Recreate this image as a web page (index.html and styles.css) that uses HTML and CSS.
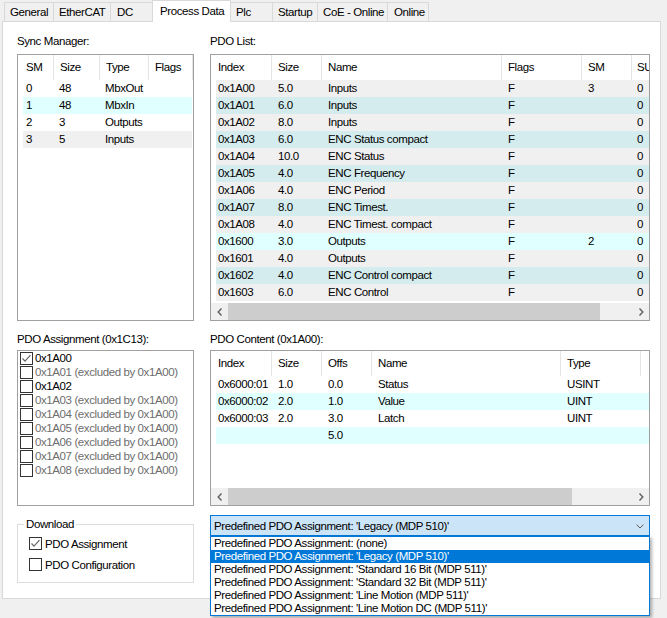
FILE: index.html
```html
<!DOCTYPE html>
<html>
<head>
<meta charset="utf-8">
<title>Process Data</title>
<link rel="stylesheet" href="styles.css">
</head>
<body>
<div class="tabstrip">
  <div class="tab t-general">General</div>
  <div class="tab t-ethercat">EtherCAT</div>
  <div class="tab t-dc">DC</div>
  <div class="tab t-pd active">Process Data</div>
  <div class="tab t-plc">Plc</div>
  <div class="tab t-startup">Startup</div>
  <div class="tab t-coe">CoE - Online</div>
  <div class="tab t-online">Online</div>
</div>
<div class="panel">
  <div class="col col-left">
    <div class="label">Sync Manager:</div>
    <div class="lv box-top lv-sync">
      <div class="lv-head"><span>SM</span><span>Size</span><span>Type</span><span>Flags</span></div>
      <div class="lv-body">
        <div class="row"><span>0</span><span>48</span><span>MbxOut</span><span></span></div>
        <div class="row cyan"><span>1</span><span>48</span><span>MbxIn</span><span></span></div>
        <div class="row"><span>2</span><span>3</span><span>Outputs</span><span></span></div>
        <div class="row gray"><span>3</span><span>5</span><span>Inputs</span><span></span></div>
      </div>
    </div>
    <div class="label second">PDO Assignment (0x1C13):</div>
    <div class="lv box-mid checklist">
      <div class="ci"><span class="cb"><svg viewBox="0 0 13 13" width="13" height="13"><polyline points="2.5,6.5 5,9.2 10.5,3.2" fill="none" stroke="#666" stroke-width="1.2"/></svg></span><span>0x1A00</span></div>
      <div class="ci dis"><span class="cb"></span><span>0x1A01 (excluded by 0x1A00)</span></div>
      <div class="ci"><span class="cb"></span><span>0x1A02</span></div>
      <div class="ci dis"><span class="cb"></span><span>0x1A03 (excluded by 0x1A00)</span></div>
      <div class="ci dis"><span class="cb"></span><span>0x1A04 (excluded by 0x1A00)</span></div>
      <div class="ci dis"><span class="cb"></span><span>0x1A05 (excluded by 0x1A00)</span></div>
      <div class="ci dis"><span class="cb"></span><span>0x1A06 (excluded by 0x1A00)</span></div>
      <div class="ci dis"><span class="cb"></span><span>0x1A07 (excluded by 0x1A00)</span></div>
      <div class="ci dis"><span class="cb"></span><span>0x1A08 (excluded by 0x1A00)</span></div>
    </div>
    <fieldset class="group">
      <legend>Download</legend>
      <div class="opt"><span class="cb"><svg viewBox="0 0 13 13" width="13" height="13"><polyline points="2.5,6.5 5,9.2 10.5,3.2" fill="none" stroke="#666" stroke-width="1.2"/></svg></span><span>PDO Assignment</span></div>
      <div class="opt"><span class="cb"></span><span>PDO Configuration</span></div>
    </fieldset>
  </div>
  <div class="col col-right">
    <div class="label">PDO List:</div>
    <div class="lv box-top lv-list">
      <div class="lv-head"><span>Index</span><span>Size</span><span>Name</span><span>Flags</span><span>SM</span><span>SU</span></div>
      <div class="lv-body">
        <div class="row gray"><span>0x1A00</span><span>5.0</span><span>Inputs</span><span>F</span><span>3</span><span>0</span></div>
        <div class="row teal"><span>0x1A01</span><span>6.0</span><span>Inputs</span><span>F</span><span></span><span>0</span></div>
        <div class="row gray"><span>0x1A02</span><span>8.0</span><span>Inputs</span><span>F</span><span></span><span>0</span></div>
        <div class="row teal"><span>0x1A03</span><span>6.0</span><span>ENC Status compact</span><span>F</span><span></span><span>0</span></div>
        <div class="row gray"><span>0x1A04</span><span>10.0</span><span>ENC Status</span><span>F</span><span></span><span>0</span></div>
        <div class="row teal"><span>0x1A05</span><span>4.0</span><span>ENC Frequency</span><span>F</span><span></span><span>0</span></div>
        <div class="row gray"><span>0x1A06</span><span>4.0</span><span>ENC Period</span><span>F</span><span></span><span>0</span></div>
        <div class="row teal"><span>0x1A07</span><span>8.0</span><span>ENC Timest.</span><span>F</span><span></span><span>0</span></div>
        <div class="row gray"><span>0x1A08</span><span>4.0</span><span>ENC Timest. compact</span><span>F</span><span></span><span>0</span></div>
        <div class="row cyan"><span>0x1600</span><span>3.0</span><span>Outputs</span><span>F</span><span>2</span><span>0</span></div>
        <div class="row gray"><span>0x1601</span><span>4.0</span><span>Outputs</span><span>F</span><span></span><span>0</span></div>
        <div class="row teal"><span>0x1602</span><span>4.0</span><span>ENC Control compact</span><span>F</span><span></span><span>0</span></div>
        <div class="row gray"><span>0x1603</span><span>6.0</span><span>ENC Control</span><span>F</span><span></span><span>0</span></div>
      </div>
      <div class="hscroll">
        <span class="arr"><svg viewBox="0 0 6 8" width="6" height="8"><polyline points="4.5,0.5 1.2,4 4.5,7.5" fill="none" stroke="#606060" stroke-width="1.4"/></svg></span>
        <span class="track"><span class="thumb thumb-list"></span></span>
        <span class="arr"><svg viewBox="0 0 6 8" width="6" height="8"><polyline points="1.5,0.5 4.8,4 1.5,7.5" fill="none" stroke="#606060" stroke-width="1.4"/></svg></span>
      </div>
    </div>
    <div class="label second">PDO Content (0x1A00):</div>
    <div class="lv box-mid lv-content">
      <div class="lv-head"><span>Index</span><span>Size</span><span>Offs</span><span>Name</span><span>Type</span><span></span></div>
      <div class="lv-body">
        <div class="row"><span>0x6000:01</span><span>1.0</span><span>0.0</span><span>Status</span><span>USINT</span><span></span></div>
        <div class="row cyan"><span>0x6000:02</span><span>2.0</span><span>1.0</span><span>Value</span><span>UINT</span><span></span></div>
        <div class="row"><span>0x6000:03</span><span>2.0</span><span>3.0</span><span>Latch</span><span>UINT</span><span></span></div>
        <div class="row cyan"><span></span><span></span><span>5.0</span><span></span><span></span><span></span></div>
      </div>
      <div class="hscroll">
        <span class="arr"><svg viewBox="0 0 6 8" width="6" height="8"><polyline points="4.5,0.5 1.2,4 4.5,7.5" fill="none" stroke="#606060" stroke-width="1.4"/></svg></span>
        <span class="track"><span class="thumb thumb-content"></span></span>
        <span class="arr"><svg viewBox="0 0 6 8" width="6" height="8"><polyline points="1.5,0.5 4.8,4 1.5,7.5" fill="none" stroke="#606060" stroke-width="1.4"/></svg></span>
      </div>
    </div>
    <div class="combo-wrap">
      <div class="combo">
        <span>Predefined PDO Assignment: 'Legacy (MDP 510)'</span>
        <svg class="chev" viewBox="0 0 8 5" width="8" height="5"><polyline points="0.5,0.5 4,4 7.5,0.5" fill="none" stroke="#606060" stroke-width="1"/></svg>
      </div>
      <div class="dropdown">
        <div class="dd-item">Predefined PDO Assignment: (none)</div>
        <div class="dd-item sel">Predefined PDO Assignment: 'Legacy (MDP 510)'</div>
        <div class="dd-item">Predefined PDO Assignment: 'Standard 16 Bit (MDP 511)'</div>
        <div class="dd-item">Predefined PDO Assignment: 'Standard 32 Bit (MDP 511)'</div>
        <div class="dd-item">Predefined PDO Assignment: 'Line Motion (MDP 511)'</div>
        <div class="dd-item">Predefined PDO Assignment: 'Line Motion DC (MDP 511)'</div>
      </div>
    </div>
  </div>
</div>
</body>
</html>
```
FILE: styles.css
```css
* { box-sizing: border-box; }
html, body { margin: 0; padding: 0; }
body {
  width: 667px;
  height: 618px;
  overflow: hidden;
  background: #f0f0f0;
  font-family: "Liberation Sans", Arial, sans-serif;
  font-size: 11.5px;
  letter-spacing: -0.4px;
  color: #000;
}

/* tabs */
.tabstrip {
  display: flex;
  align-items: flex-end;
  height: 21px;
  padding-left: 4px;
}
.tab {
  height: 19px;
  border: 1px solid #d9d9d9;
  border-bottom: 0;
  margin-right: -1px;
  padding: 2px 0 0 5px;
  line-height: 15px;
  background: #f0f0f0;
  white-space: nowrap;
}
.tab.active {
  height: 22px;
  margin-bottom: -1px;
  background: #fff;
  position: relative;
  z-index: 1;
  padding: 3px 0 0 7px;
}
.t-general { width: 50px; }
.t-ethercat { width: 58px; }
.t-dc { width: 43px; padding-left: 6px; }
.t-pd { width: 79px; }
.t-plc { width: 43px; }
.t-startup { width: 46px; }
.t-coe { width: 71px; }
.t-online { width: 42px; padding-left: 6px; }

/* panel */
.panel {
  margin-left: 2px;
  width: 659px;
  height: 578px;
  background: #fff;
  border: 1px solid #d9d9d9;
  display: flex;
  gap: 16px;
  padding: 12px 0 0 14px;
}
.col { display: flex; flex-direction: column; }
.col-left { width: 177px; }
.col-right { width: 440px; }
.label { height: 14px; line-height: 14px; white-space: nowrap; }
.label.second { margin-top: 11px; }
.box-top { margin-top: 6px; height: 267px; }
.box-mid { margin-top: 4px; height: 156px; }

/* list view */
.lv {
  border: 1px solid #a0a0a0;
  background: #fff;
  display: flex;
  flex-direction: column;
  overflow: hidden;
}
.lv-head {
  display: grid;
  height: 25px;
  flex: none;
  white-space: nowrap;
}
.lv-head span {
  border-right: 1px solid #e5e5e5;
  line-height: 25px;
  padding-left: 6px;
  overflow: hidden;
}
.lv-body { flex: 1; overflow: hidden; }
.row {
  display: grid;
  height: 17px;
  line-height: 17px;
  margin-left: 5px;
  white-space: nowrap;
}
.row span { padding-left: 6px; overflow: visible; }
.row span:first-child { padding-left: 2px; }
.lv-head span:first-child { padding-left: 7px; }
.row.gray { background: #f0f0f0; }
.row.teal { background: #d4ecee; }
.row.cyan { background: #e0ffff; }

.lv-sync .lv-head { grid-template-columns: 36px 46px 49px 1fr; }
.lv-sync .lv-head span:first-child { padding-left: 8px; }
.lv-sync .row { grid-template-columns: 31px 46px 49px 1fr; margin-right: 1px; }
.lv-sync .row span { padding-left: 5px; }
.lv-sync .row span:first-child { padding-left: 3px; }

.lv-list .lv-head { grid-template-columns: 61px 50px 180px 80px 50px 60px; }
.lv-list .lv-head span:last-child { padding-left: 5px; }
.lv-list .row { grid-template-columns: 56px 50px 180px 80px 50px 60px; }
.lv-list .row span:last-child { padding-left: 5px; }

.lv-content .lv-head { grid-template-columns: 61px 50px 50px 189px 80px 1fr; }
.lv-content .lv-head span:last-child { border-right: 0; }
.lv-content .row { grid-template-columns: 56px 50px 50px 189px 80px 1fr; }

/* horizontal scrollbar */
.hscroll {
  flex: none;
  display: flex;
  height: 17px;
  background: #f0f0f0;
}
.arr {
  width: 17px;
  display: flex;
  align-items: center;
  justify-content: center;
}
.track { flex: 1; display: flex; }
.thumb { background: #cdcdcd; height: 17px; }
.thumb-list { width: 372px; }
.thumb-content { width: 344px; }

/* checklist */
.checklist { padding-left: 2px; }
.ci {
  display: flex;
  align-items: center;
  gap: 2px;
  height: 14px;
  white-space: nowrap;
}
.ci.dis { color: #6d6d6d; }
.cb {
  width: 13px;
  height: 13px;
  border: 1px solid #333;
  background: #fff;
  flex: none;
  position: relative;
}
.cb svg { position: absolute; left: -1px; top: -1px; }

/* download group */
.group {
  margin: 11px 0 0;
  padding: 2px 0 7px 6px;
  border: 1px solid #dcdcdc;
  width: 177px;
}
.group legend {
  padding: 0 2px;
  line-height: 14px;
}
.opt {
  display: flex;
  align-items: center;
  gap: 3px;
  height: 21px;
  margin-left: 5px;
}

/* combobox */
.combo-wrap { position: relative; margin-top: 9px; }
.combo {
  height: 21px;
  border: 1px solid #0078d7;
  background: #cce4f7;
  display: flex;
  align-items: center;
  justify-content: space-between;
  padding: 0 5px 0 3px;
  white-space: nowrap;
}
.chev { margin-top: 1px; }
.dropdown {
  position: absolute;
  left: 0;
  top: 21px;
  width: 440px;
  background: #fff;
  border: 1px solid #0078d7;
  box-shadow: 2px 2px 3px rgba(0, 0, 0, 0.3);
  z-index: 5;
}
.dd-item {
  height: 13px;
  line-height: 13px;
  padding-left: 3px;
  white-space: nowrap;
}
.dd-item.sel { background: #0078d7; color: #fff; }
```
